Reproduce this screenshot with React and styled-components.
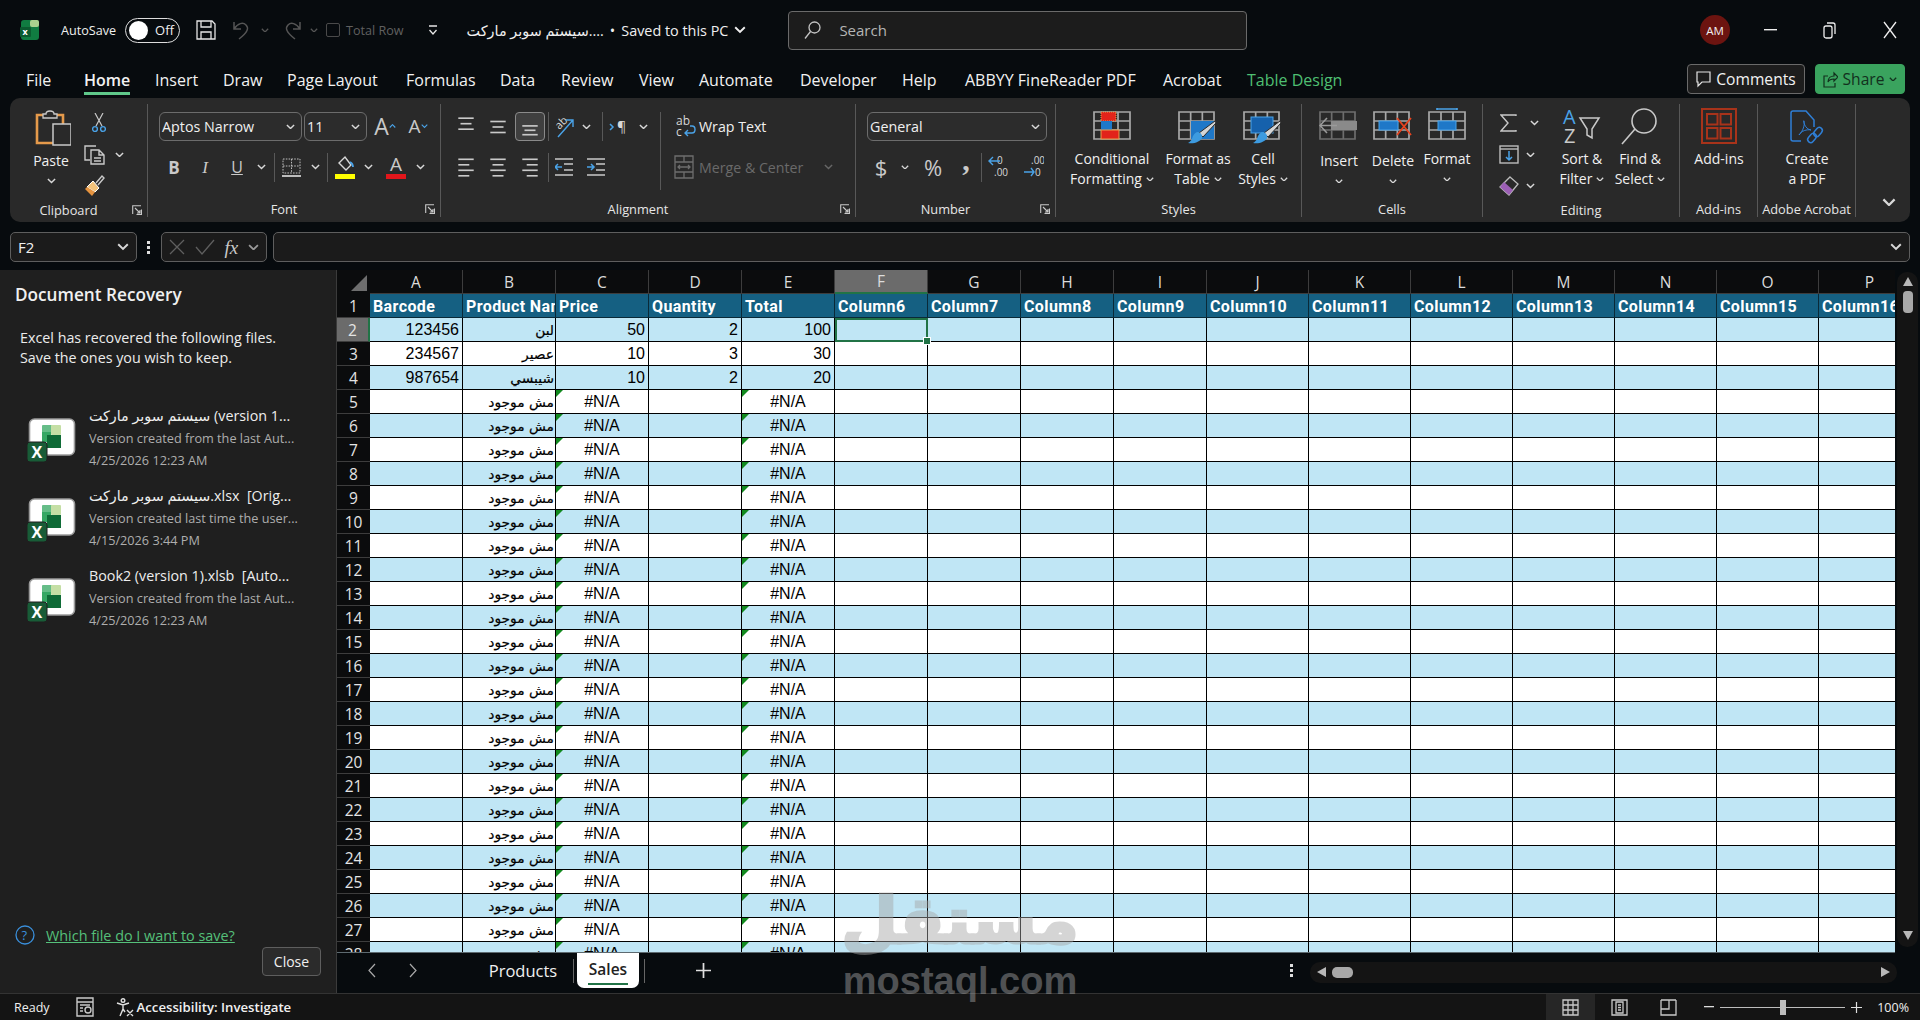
import React from "react";
import styled, { createGlobalStyle } from "styled-components";

const ui = `"Open Sans", "Noto Sans", "DejaVu Sans", sans-serif`;
const arabicUi = `"Open Sans", "DejaVu Sans", sans-serif`;

const Global = createGlobalStyle`
  html, body { margin: 0; padding: 0; background: #070b0e; }
  * { box-sizing: border-box; }
`;

const Page = styled.div`
  position: relative;
  width: 1920px;
  height: 1020px;
  overflow: hidden;
  display: flex;
  flex-direction: column;
  background: #070b0e;
  color: #f0f0f0;
  font-family: ${ui};
`;

/* title bar */
const TitleBar = styled.div`
  height: 60px;
  display: flex;
  align-items: center;
  padding-left: 20px;
  font-size: 12.6px;
  flex: none;
`;
const TitleItem = styled.div`
  display: flex;
  align-items: center;
  margin-left: ${(p) => p.$ml || 0}px;
  color: ${(p) => p.$color || "#f0f0f0"};
`;
const DocName = styled(TitleItem)`
  font-family: ${arabicUi};
  font-size: 14.4px;
  gap: 6px;
`;
const Toggle = styled.div`
  width: 55px;
  height: 25px;
  margin-left: 9px;
  border: 1px solid #ddd;
  border-radius: 13px;
  display: flex;
  align-items: center;
  padding-left: 3px;
  font-size: 13px;
  gap: 7px;
  &::before {
    content: "";
    width: 19px;
    height: 19px;
    border-radius: 50%;
    background: #fff;
  }
`;
const Check = styled.div`
  width: 14px;
  height: 14px;
  border: 1px solid #4a4a4a;
  border-radius: 2px;
  margin-left: 8px;
`;
const SearchBox = styled.div`
  width: 459px;
  height: 39px;
  margin-left: 42px;
  background: #1c1c1c;
  border: 1px solid #6a6a6a;
  border-radius: 4px;
  display: flex;
  align-items: center;
  padding-left: 15px;
  gap: 18px;
  color: #b5b5b5;
  font-size: 15px;
`;
const Avatar = styled.div`
  width: 30px;
  height: 30px;
  margin-left: auto;
  border-radius: 50%;
  background: #6c1410;
  font-size: 11.5px;
  display: flex;
  align-items: center;
  justify-content: center;
`;
const WinBtn = styled.div`
  width: ${(p) => p.$w}px;
  margin-left: ${(p) => p.$ml || 0}px;
  display: flex;
  justify-content: center;
`;

/* tab row */
const TabRow = styled.div`
  height: 38px;
  flex: none;
  display: flex;
  align-items: flex-start;
  padding: 4px 15px 0 26px;
`;
const Tab = styled.div`
  width: ${(p) => p.$w}px;
  margin-top: 6px;
  font-size: 16px;
  line-height: 20px;
  white-space: nowrap;
  color: ${(p) => (p.$green ? "#4fbf72" : "#f2f2f2")};
`;
const TabText = styled.span`
  display: inline-block;
  padding-bottom: 2px;
  font-weight: ${(p) => (p.$on ? 600 : 400)};
  border-bottom: 3px solid ${(p) => (p.$on ? "#5fc88a" : "transparent")};
`;
const TopBtn = styled.div`
  height: 30px;
  width: ${(p) => p.$w}px;
  margin-left: ${(p) => (p.$auto ? "auto" : (p.$ml || 0) + "px")};
  border-radius: 4px;
  border: 1px solid ${(p) => (p.$fill ? p.$fill : "#6a6a6a")};
  background: ${(p) => p.$fill || "#1d1d1d"};
  color: ${(p) => (p.$fill ? "#12301d" : "#f2f2f2")};
  font-size: 15.6px;
  display: flex;
  align-items: center;
  justify-content: center;
  gap: 5px;
`;

/* ribbon */
const Ribbon = styled.div`
  height: 124px;
  margin: 0 10px;
  flex: none;
  background: #292929;
  border-radius: 10px;
  display: flex;
  font-size: 14px;
  color: #f0f0f0;
`;
const Group = styled.div`
  width: ${(p) => p.$w}px;
  height: 113px;
  margin-top: 6px;
  display: flex;
  flex-direction: column;
  border-right: 1px solid #585858;
  flex: none;
`;
const GroupBody = styled.div`
  height: 98px;
  display: flex;
  padding: ${(p) => p.$pad || "0"};
`;
const GroupFoot = styled.div`
  height: 16px;
  display: flex;
  align-items: center;
  font-size: 12.8px;
  line-height: 16px;
  white-space: nowrap;
  color: #e6e6e6;
`;
const FootLabel = styled.div`
  flex: 1;
  text-align: center;
`;
const Launcher = styled.div`
  width: 20px;
  height: 16px;
  display: flex;
  align-items: center;
  justify-content: center;
`;
const Stack = styled.div`
  display: flex;
  flex-direction: column;
  align-items: ${(p) => (p.$center ? "center" : "stretch")};
  width: ${(p) => (p.$w ? p.$w + "px" : "auto")};
  flex: none;
  border-right: ${(p) => (p.$line ? "1px solid #585858" : "none")};
  height: ${(p) => (p.$line ? "78px" : "auto")};
  margin-top: ${(p) => p.$mt || 0}px;
`;
const BarRow = styled.div`
  display: flex;
  align-items: center;
  height: ${(p) => p.$h || 29}px;
  margin-top: ${(p) => p.$mt || 0}px;
  padding-left: ${(p) => p.$pl || 0}px;
`;
const Slot = styled.div`
  width: ${(p) => p.$w}px;
  height: ${(p) => p.$h || 29}px;
  flex: none;
  margin-left: ${(p) => p.$ml || 0}px;
  display: flex;
  align-items: center;
  justify-content: center;
  border: ${(p) => (p.$on ? "1px solid #8a8a8a" : "none")};
  border-radius: 4px;
  background: ${(p) => (p.$on ? "#3f3f3f" : "none")};
`;
const VLine = styled.div`
  width: 1px;
  height: 29px;
  flex: none;
  background: #585858;
  margin-left: ${(p) => p.$ml || 0}px;
`;
const Combo = styled.div`
  width: ${(p) => p.$w}px;
  height: 29px;
  margin-left: ${(p) => p.$ml || 0}px;
  flex: none;
  border: 1px solid #6c6c6c;
  border-radius: 6px;
  background: #2c2c2c;
  display: flex;
  align-items: center;
  justify-content: space-between;
  padding: 0 6px 0 2px;
  font-size: 14.3px;
`;
const Glyph = styled.span`
  font-family: ${(p) => p.$font || ui};
  font-size: ${(p) => p.$size || 16}px;
  font-weight: ${(p) => p.$weight || 400};
  font-style: ${(p) => (p.$italic ? "italic" : "normal")};
  text-decoration: ${(p) => (p.$under ? "underline" : "none")};
  color: ${(p) => p.$color || "#c9c9c9"};
  padding-bottom: ${(p) => p.$lift || 0}px;
  line-height: 1;
`;
const SmallText = styled.span`
  color: ${(p) => (p.$dim ? "#6a6a6a" : "#f0f0f0")};
  margin-left: ${(p) => p.$ml || 0}px;
  font-size: 14.2px;
  white-space: nowrap;
`;
const BigBtn = styled.div`
  width: ${(p) => p.$w}px;
  flex: none;
  display: flex;
  flex-direction: column;
  align-items: center;
  padding-top: 4px;
`;
const BigIcon = styled.div`
  height: 41px;
  display: flex;
  justify-content: center;
`;
const BigLine = styled.div`
  height: 20px;
  margin-top: ${(p) => p.$mt || 0}px;
  line-height: 20px;
  white-space: nowrap;
  display: flex;
  align-items: center;
  gap: 4px;
`;
const Collapse = styled.div`
  margin: auto 14px 12px auto;
`;

/* formula bar */
const FormulaBar = styled.div`
  height: 30px;
  margin: 10px 10px 8px;
  flex: none;
  display: flex;
  align-items: stretch;
`;
const FormulaBox = styled.div`
  width: ${(p) => (p.$w ? p.$w + "px" : "auto")};
  flex: ${(p) => (p.$w ? "none" : 1)};
  margin-left: ${(p) => p.$ml || 0}px;
  background: #1b1b1b;
  border: 1px solid #5e5e5e;
  border-radius: 5px;
  display: flex;
  align-items: center;
  justify-content: space-between;
  padding: 0 7px;
  font-size: 15px;
`;
const Dots = styled.div`
  width: 3px;
  height: 13px;
  flex: none;
  margin: ${(p) => (p.$flush ? "0" : "auto 0 auto 10px")};
  background: repeating-linear-gradient(#ddd 0 3px, transparent 3px 5px);
`;

/* main */
const Main = styled.div`
  flex: 1;
  display: flex;
  min-height: 0;
`;
const Panel = styled.div`
  width: 337px;
  flex: none;
  background: #1f1f1f;
  border-right: 1px solid #3b3b3b;
  display: flex;
  flex-direction: column;
  padding-top: 13px;
`;
const PanelTitle = styled.div`
  font-size: 17.2px;
  font-weight: 600;
  line-height: 24px;
  padding-left: 15px;
`;
const PanelDesc = styled.div`
  margin: 21px 0 37px;
  padding-left: 20px;
  font-size: 14.3px;
  line-height: 20px;
  color: #ececec;
`;
const Recovered = styled.div`
  height: 80px;
  display: flex;
  padding-left: 27px;
  gap: 12px;
`;
const RecIcon = styled.div`
  margin-top: 13px;
  width: 50px;
  height: 46px;
`;
const RecLine = styled.div`
  height: 22px;
  line-height: 22px;
  white-space: pre;
  font-size: ${(p) => (p.$main ? 14.3 : 12.7)}px;
  color: ${(p) => (p.$main ? "#eeeeee" : "#aeaeae")};
  font-family: ${arabicUi};
`;
const HelpRow = styled.div`
  margin-top: auto;
  padding: 0 0 0 15px;
  display: flex;
  align-items: center;
  gap: 11px;
  font-size: 14.4px;
`;
const HelpLink = styled.span`
  color: #55c07a;
  text-decoration: underline;
`;
const CloseBtn = styled.div`
  width: 59px;
  height: 29px;
  margin: 2px 0 17px 262px;
  border: 1px solid #5e5e5e;
  border-radius: 4px;
  background: #2b2b2b;
  display: flex;
  align-items: center;
  justify-content: center;
  font-size: 14px;
`;

const Workbook = styled.div`
  flex: 1;
  min-width: 0;
  display: flex;
  flex-direction: column;
`;
const SheetRow = styled.div`
  height: 683px;
  display: flex;
  flex: none;
`;
const Sheet = styled.div`
  flex: 1;
  min-width: 0;
  overflow: hidden;
  display: grid;
  grid-template-columns: 33px repeat(9, 93px) repeat(7, 102px);
  grid-auto-rows: 24px;
  border-bottom: 1px solid #5d6a70;
  align-content: start;
`;
const Corner = styled.div`
  background: #0b0c0d;
  display: flex;
  align-items: flex-end;
  justify-content: flex-end;
  padding: 0 3px 3px 0;
  &::after {
    content: "";
    width: 16px;
    height: 16px;
    background: #6e6e6e;
    clip-path: polygon(100% 0, 100% 100%, 0 100%);
  }
`;
const ColHead = styled.div`
  background: ${(p) => (p.$on ? "#6b6b6b" : "#0b0c0d")};
  border-right: 1px solid #3d3d3d;
  border-bottom: ${(p) => (p.$on ? "2px solid #217346" : "1px solid #3d3d3d")};
  color: #dcdcdc;
  font-size: 15.5px;
  display: flex;
  align-items: center;
  justify-content: center;
`;
const RowHead = styled.div`
  background: ${(p) => (p.$on ? "#6b6b6b" : "#0b0c0d")};
  border-bottom: 1px solid #3d3d3d;
  border-right: ${(p) => (p.$on ? "2px solid #217346" : "none")};
  color: #e4e4e4;
  font-size: 15.5px;
  display: flex;
  align-items: center;
  justify-content: center;
`;
const HeadCell = styled.div`
  background: #156082;
  color: #fff;
  font-family: Roboto, "Liberation Sans", sans-serif;
  font-weight: 700;
  font-size: 16px;
  letter-spacing: 0.4px;
  line-height: 25px;
  padding-left: 3px;
  white-space: nowrap;
  overflow: hidden;
  border-right: 1px solid #0a2a38;
  border-bottom: 1px solid #0a2a38;
`;
const Cell = styled.div`
  position: relative;
  background: ${(p) => (p.$band ? "#c0e6f5" : "#fff")};
  color: #000;
  font-family: "Liberation Sans", "DejaVu Sans", sans-serif;
  font-size: 16px;
  line-height: 24px;
  padding: 0 3px;
  text-align: ${(p) => p.$align || "right"};
  white-space: nowrap;
  border-right: 1px solid #000;
  border-bottom: 1px solid #000;
  &::before {
    content: "";
    display: ${(p) => (p.$error ? "block" : "none")};
    position: absolute;
    top: 0;
    left: 0;
    border-style: solid;
    border-width: 7px 7px 0 0;
    border-color: #128a1f transparent transparent transparent;
  }
`;
const ArabicText = styled.span`
  font-family: "DejaVu Sans", sans-serif;
  font-size: 13.8px;
  margin-right: -2px;
  -webkit-text-stroke: 0.2px #000;
`;
const ActiveCell = styled(Cell)`
  z-index: 1;
  outline: 2px solid #217346;
  outline-offset: -2px;
  &::after {
    content: "";
    position: absolute;
    right: -4px;
    bottom: -4px;
    width: 6px;
    height: 6px;
    background: #217346;
    border: 1px solid #fff;
  }
`;
const VScroll = styled.div`
  width: 25px;
  flex: none;
  display: flex;
  flex-direction: column;
  align-items: center;
  padding: 2px 2px 6px;
  background: #070b0e;
`;
const VTrack = styled.div`
  flex: 1;
  width: 21px;
  border-radius: 10px;
  background: #141414;
  display: flex;
  flex-direction: column;
  align-items: center;
  padding: 4px 0 6px;
`;
const VThumb = styled.div`
  width: 10px;
  height: 22px;
  margin: 4px 0 auto;
  border-radius: 4px;
  background: #a8a8a8;
`;
const TabStrip = styled.div`
  height: 40px;
  flex: none;
  display: flex;
  align-items: flex-start;
`;
const StripSlot = styled.div`
  width: ${(p) => p.$w}px;
  height: 35px;
  flex: none;
  margin-left: ${(p) => p.$ml || 0}px;
  display: flex;
  align-items: center;
  justify-content: center;
  font-size: 16.5px;
  white-space: nowrap;
`;
const SalesTab = styled.div`
  width: 62px;
  height: 35px;
  margin-left: ${(p) => p.$ml}px;
  background: #fff;
  color: #222;
  font-size: 15.5px;
  font-weight: 600;
  border-radius: 0 0 7px 7px;
  display: flex;
  flex-direction: column;
  align-items: center;
  justify-content: flex-end;
  padding-bottom: 3px;
  &::after {
    content: "";
    width: 40px;
    height: 2px;
    margin-top: 3px;
    background: #217346;
  }
`;
const TabSep = styled.div`
  width: 1px;
  height: 24px;
  margin: 6px 0 0 ${(p) => p.$ml || 0}px;
  background: #666;
`;
const HScroll = styled.div`
  width: 587px;
  height: 21px;
  margin: 9px 0 0 9px;
  border-radius: 10px;
  background: #141414;
  display: flex;
  align-items: center;
  padding: 0 6px;
`;
const HThumb = styled.div`
  width: 21px;
  height: 11px;
  margin-left: 6px;
  margin-right: auto;
  border-radius: 5px;
  background: #a8a8a8;
`;

/* status bar */
const StatusBar = styled.div`
  height: 27px;
  flex: none;
  background: #141414;
  border-top: 1px solid #333;
  display: flex;
  align-items: center;
  font-size: 12.5px;
  padding-left: 14px;
`;
const StatusItem = styled.div`
  display: flex;
  align-items: center;
  gap: ${(p) => p.$gap || 0}px;
  margin-left: ${(p) => p.$ml || 0}px;
  margin-right: ${(p) => p.$mr || 0}px;
  font-weight: ${(p) => p.$weight || 400};
  font-size: ${(p) => (p.$big ? "13.2px" : "inherit")};
`;
const ViewBtn = styled.div`
  width: 49px;
  height: 26px;
  flex: none;
  margin-left: ${(p) => (p.$auto ? "auto" : 0)};
  background: ${(p) => (p.$on ? "#262626" : "none")};
  display: flex;
  align-items: center;
  justify-content: center;
`;
const Zoom = styled.div`
  width: 125px;
  height: 1px;
  margin: 0 6px;
  background: #bdbdbd;
  display: flex;
  align-items: center;
  justify-content: center;
  &::after {
    content: "";
    width: 6px;
    height: 15px;
    background: #bdbdbd;
  }
`;

/* watermark */
const Watermark = styled.div`
  position: absolute;
  left: 830px;
  top: 882px;
  width: 260px;
  text-align: center;
  pointer-events: none;
  color: rgb(165, 165, 165);
  opacity: 0.46;
  font-weight: 700;
`;
const MarkArabic = styled.div`
  font-family: "DejaVu Sans", sans-serif;
  font-size: 65px;
  line-height: 78px;
  direction: rtl;
  -webkit-text-stroke: 3px rgb(165, 165, 165);
`;
const MarkLatin = styled.div`
  font-family: "Liberation Sans", sans-serif;
  font-size: 38px;
  line-height: 42px;
`;

/* icons */
const Ico = ({ w, h = w, children }) => (
  <svg width={w} height={h} viewBox={`0 0 ${w} ${h}`} fill="none" stroke="#c9c9c9" strokeWidth="1.4">
    {children}
  </svg>
);
const Chev = ({ size = 9, color = "#d8d8d8", up }) => (
  <svg width={size} height={size * 0.6} viewBox="0 0 10 6" fill="none" stroke={color} strokeWidth="1.6">
    <path d={up ? "M1 5l4-4 4 4" : "M1 1l4 4 4-4"} />
  </svg>
);
const Launch = () => (
  <Ico w={10}>
    <path d="M9.500 4.500v5h-5M.7 9V.7H9M3 3l5 5M8 5v3H5" strokeWidth="1.1" />
  </Ico>
);

const XlLogo = () => (
  <svg width="20" height="20" viewBox="0 0 20 20">
    <rect x="1" y="0" width="18" height="20" rx="3" fill="#107c41" />
    <rect x="10" y="0" width="9" height="7" rx="2" fill="#a9d18e" />
    <rect x="0" y="7" width="11" height="10" rx="1" fill="#0b5c30" />
    <text x="2.500" y="15" fontSize="9" fontWeight="700" fill="#fff" fontFamily="Open Sans">x</text>
  </svg>
);
const SaveIcon = () => (
  <svg width="20" height="20" viewBox="0 0 20 20" fill="none" stroke="#e6e6e6" strokeWidth="1.3">
    <path d="M1 1h15l3 3v15H1zM5 1v6h10V1M5 19v-7h10v7" />
  </svg>
);
const Undo = ({ flip }) => (
  <svg width="20" height="20" viewBox="0 0 20 20" fill="none" stroke="#555" strokeWidth="1.5" style={flip ? { transform: "scaleX(-1)" } : undefined}>
    <path d="M2 2v7h7M2 9c4-6 9-7 12-4 3 3 2 7-7 14" />
  </svg>
);
const Customize = () => (
  <svg width="10" height="11" viewBox="0 0 10 11" fill="none" stroke="#e6e6e6" strokeWidth="1.3">
    <path d="M1 1h8M1.500 5l3.500 4 3.500-4" />
  </svg>
);
const SearchGlass = () => (
  <svg width="17" height="19" viewBox="0 0 17 19" fill="none" stroke="#c4c4c4" strokeWidth="1.3">
    <circle cx="10.500" cy="6.500" r="5.500" />
    <path d="M6.500 10.500L1 17.500" />
  </svg>
);
const Minimize = () => <svg width="13" height="2" viewBox="0 0 13 2"><rect width="13" height="1.400" fill="#eee" /></svg>;
const Restore = () => (
  <svg width="13" height="19" viewBox="0 0 13 19" fill="none" stroke="#eee" strokeWidth="1.3">
    <rect x="1" y="5" width="8" height="12" rx="2" />
    <path d="M4 2h6a2 2 0 0 1 2 2v9" />
  </svg>
);
const CloseX = () => (
  <svg width="14" height="20" viewBox="0 0 14 20" fill="none" stroke="#eee" strokeWidth="1.3">
    <path d="M1 2l12 16M13 2L1 18" />
  </svg>
);
const CommentIcon = () => (
  <svg width="15" height="17" viewBox="0 0 15 17" fill="none" stroke="#e6e6e6" strokeWidth="1.2">
    <path d="M1 1h13v10H6l-4 4v-4H1z" />
  </svg>
);
const ShareIcon = () => (
  <svg width="15" height="17" viewBox="0 0 15 17" fill="none" stroke="#12301d" strokeWidth="1.2">
    <path d="M5 5H1v11h11v-4M5 11c0-4 3-6 6-6V2l4 4-4 4V8c-3 0-5 1-6 3z" />
  </svg>
);

const PasteIcon = () => (
  <svg width="40" height="41" viewBox="0 0 40 41" fill="none">
    <path d="M12 7H6v28h16" stroke="#e59a4b" strokeWidth="2.600" />
    <path d="M26 7h6v9" stroke="#e59a4b" strokeWidth="2.600" />
    <path d="M12 10V6h3c0-4 8-4 8 0h3v4z" fill="#292929" stroke="#c9c9c9" strokeWidth="1.300" />
    <rect x="22" y="16" width="18" height="21" fill="#292929" stroke="#c9c9c9" strokeWidth="1.500" />
  </svg>
);
const Scissors = () => (
  <svg width="14" height="20" viewBox="0 0 14 20" fill="none">
    <path d="M3 0l7 13M11 0L4 13" stroke="#c9c9c9" strokeWidth="1.200" />
    <circle cx="3" cy="16" r="2.400" stroke="#4aa3e8" strokeWidth="1.400" />
    <circle cx="11" cy="16" r="2.400" stroke="#4aa3e8" strokeWidth="1.400" />
  </svg>
);
const CopyIcon = () => (
  <Ico w={21} h={20}>
    <path d="M12 1H1v14h5M7 5h8l5 5v9H7zM15 5v5h5M10 13h7M10 16h7" />
  </Ico>
);
const BrushIcon = () => (
  <svg width="21" height="24" viewBox="0 0 21 24" fill="none">
    <path d="M12 9l6-7 2 2-6 7" stroke="#c9c9c9" strokeWidth="1.400" />
    <path d="M9 7l6 7-4 4-8-5z" fill="#f2c27a" stroke="#fff" strokeWidth="1" />
    <path d="M3 13l8 5-3 4-7-7z" fill="#e5933f" />
  </svg>
);
const FillIcon = () => (
  <svg width="20" height="24" viewBox="0 0 20 24" fill="none">
    <path d="M4 8l6-6 6 8-5 5z" stroke="#d8d8d8" strokeWidth="1.400" />
    <path d="M15 7c2 1 3 3 3 5" stroke="#4aa3e8" strokeWidth="1.800" />
    <rect y="19" width="20" height="5" fill="#ffff00" />
  </svg>
);
const BorderIcon = () => (
  <svg width="19" height="19" viewBox="0 0 19 19" fill="none" stroke="#bdbdbd">
    <path d="M1 1h17v14H1zM9.500 1v14M1 8h17" strokeDasharray="1.600 1.200" />
    <path d="M0 18h19" strokeWidth="2" />
  </svg>
);
const Bars = ({ rows }) => (
  <svg width="18" height="22" viewBox="0 0 16 20" fill="none" stroke="#c9c9c9" strokeWidth="1.500">
    {rows.map(([a, b, y]) => (
      <path key={y} d={`M${a} ${y}H${b}`} />
    ))}
  </svg>
);
const OrientIcon = () => (
  <svg width="20" height="24" viewBox="0 0 20 24" fill="none">
    <text x="2" y="13" fontSize="11" fill="#d8d8d8" fontFamily="Open Sans" transform="rotate(-45 6 10)">ab</text>
    <path d="M4 22L19 5M12 5h7v7" stroke="#4aa3e8" strokeWidth="1.400" />
  </svg>
);
const RtlIcon = () => (
  <svg width="22" height="16" viewBox="0 0 22 16" fill="none">
    <path d="M1 5l3 3-3 3" stroke="#4aa3e8" strokeWidth="1.500" />
    <text x="8" y="13" fontSize="14" fill="#d8d8d8" fontFamily="Open Sans">¶</text>
  </svg>
);
const WrapIcon = () => (
  <svg width="20" height="24" viewBox="0 0 20 24" fill="none">
    <text x="0" y="10" fontSize="12" fill="#d8d8d8" fontFamily="Open Sans">ab</text>
    <text x="0" y="21" fontSize="12" fill="#d8d8d8" fontFamily="Open Sans">c</text>
    <path d="M14 11h2c4 0 4 7 0 7H9M12 15l-3 3 3 3" stroke="#4aa3e8" strokeWidth="1.400" />
  </svg>
);
const MergeIcon = () => (
  <svg width="20" height="24" viewBox="0 0 20 24" fill="none" stroke="#6e6e6e" strokeWidth="1.300">
    <path d="M1 1h18v22H1zM1 7h18M1 17h18M10 1v6M10 17v6M4 12h12M6 10l-2 2 2 2M14 10l2 2-2 2" />
  </svg>
);
const IndentIcon = ({ flip }) => (
  <svg width="18" height="20" viewBox="0 0 18 20" fill="none" strokeWidth="1.500">
    <path d="M0 2h18M9 7h9M9 13h9M0 18h18" stroke="#c9c9c9" />
    {flip ? <path d="M0 10h7M4 7l3 3-3 3" stroke="#4aa3e8" /> : <path d="M7 10H0M3 7l-3 3 3 3" stroke="#4aa3e8" />}
  </svg>
);
const DecIcon = ({ more }) => (
  <svg width="22" height="24" viewBox="0 0 22 24" fill="none">
    <text x="9" y="9" fontSize="10" fill="#d8d8d8" fontFamily="Open Sans">{more ? ".00" : "0"}</text>
    <text x={more ? 13 : 6} y="21" fontSize="10" fill="#d8d8d8" fontFamily="Open Sans">{more ? "0" : ".00"}</text>
    {more ? (
      <path d="M2 17h10M9 13l3 4-3 4" stroke="#4aa3e8" strokeWidth="1.400" />
    ) : (
      <path d="M12 6H2M5 2L1 6l4 4" stroke="#4aa3e8" strokeWidth="1.400" />
    )}
  </svg>
);

const GridLines = ({ x, y, w, h, cols = 3, rows = 3, color = "#a8a8a8" }) => {
  const parts = [`M${x} ${y}h${w}v${h}h${-w}z`];
  for (let i = 1; i < cols; i++) parts.push(`M${x + (w / cols) * i} ${y}v${h}`);
  for (let i = 1; i < rows; i++) parts.push(`M${x} ${y + (h / rows) * i}h${w}`);
  return <path d={parts.join("")} stroke={color} strokeWidth="1.700" />;
};
const BrushTip = ({ x, y }) => (
  <g transform={`translate(${x} ${y})`}>
    <path d="M11 12L27 0l1 2-13 14z" fill="#d5d5d5" stroke="#292929" strokeWidth="1" />
    <path d="M10 11c2 0 5 3 4 6-2 4-8 6-14 5 4-2 4-5 5-7 1-2 3-4 5-4z" fill="#3d9be0" />
  </g>
);
const BigSvg = ({ children }) => (
  <svg width="40" height="41" viewBox="0 0 40 41" fill="none">
    {children}
  </svg>
);
const CondIcon = () => (
  <BigSvg>
    <GridLines x={2} y={4} w={36} h={27} />
    <rect x="9" y="4" width="15" height="9" fill="#e2231a" stroke="#e9a04d" strokeDasharray="1 1" />
    <rect x="9" y="13" width="11" height="9" fill="#1f78c8" />
    <rect x="9" y="22" width="18" height="9" fill="#e2231a" stroke="#e9a04d" />
  </BigSvg>
);
const TableStyleIcon = () => (
  <BigSvg>
    <GridLines x={1} y={4} w={35} h={27} />
    <rect x="13" y="13" width="23" height="18" fill="#1f78c8" />
    <BrushTip x={10} y={13} />
  </BigSvg>
);
const CellStyleIcon = () => (
  <BigSvg>
    <GridLines x={1} y={4} w={35} h={27} />
    <rect x="8" y="9" width="22" height="16" fill="#1661ac" stroke="#4aa3e8" />
    <BrushTip x={10} y={13} />
  </BigSvg>
);
const InsertIcon = () => (
  <BigSvg>
    <GridLines x={1} y={4} w={35} h={27} color="#6d6d6d" />
    <rect x="12" y="13" width="26" height="9" fill="#8a8a8a" />
    <path d="M18 17.500H1M8 10l-7 7.500L8 25" stroke="#9a9a9a" strokeWidth="1.600" />
  </BigSvg>
);
const DeleteIcon = () => (
  <BigSvg>
    <GridLines x={1} y={4} w={35} h={27} />
    <rect x="6" y="13" width="19" height="9" fill="#1f78c8" stroke="#4aa3e8" />
    <path d="M24 10l14 17M38 10L24 27" stroke="#e8431f" strokeWidth="1.800" />
  </BigSvg>
);
const FormatIcon = () => (
  <BigSvg>
    <GridLines x={2} y={4} w={36} h={27} />
    <rect x="11" y="13" width="18" height="9" fill="#1f78c8" stroke="#4aa3e8" />
    <path d="M10 0v2M30 0v2M10 1h20" stroke="#4aa3e8" strokeWidth="1.600" />
  </BigSvg>
);
const SigmaIcon = () => (
  <Ico w={17} h={18}>
    <path d="M16 2V1H1l7 8-7 8h15v-1" />
  </Ico>
);
const FillDownIcon = () => (
  <svg width="20" height="19" viewBox="0 0 20 19" fill="none">
    <rect x="1" y="1" width="18" height="17" fill="#222" stroke="#bdbdbd" strokeWidth="1.400" />
    <path d="M1 4h18" stroke="#bdbdbd" strokeWidth="1.400" />
    <path d="M10 6v9M7 12l3 3 3-3" stroke="#4aa3e8" strokeWidth="1.500" />
  </svg>
);
const EraserIcon = () => (
  <svg width="20" height="20" viewBox="0 0 20 20" fill="none">
    <path d="M11 1l8 7-9 11-9-8z" stroke="#bdbdbd" strokeWidth="1.300" />
    <path d="M1 11l4-5 9 8-4 5z" fill="#9c5fb5" />
  </svg>
);
const SortIcon = () => (
  <svg width="40" height="41" viewBox="0 0 40 41" fill="none">
    <text x="1" y="16" fontSize="20" fill="#4aa3e8" fontFamily="Open Sans">A</text>
    <text x="2" y="35" fontSize="20" fill="#c9c9c9" fontFamily="Open Sans">Z</text>
    <path d="M18 10h19l-7 11v9l-5-3v-6z" stroke="#c9c9c9" strokeWidth="1.500" />
  </svg>
);
const FindIcon = () => (
  <svg width="40" height="41" viewBox="0 0 40 41" fill="none" stroke="#c9c9c9" strokeWidth="1.600">
    <circle cx="24" cy="13" r="12" />
    <path d="M15 21L2 36" />
  </svg>
);
const AddinsIcon = () => (
  <svg width="40" height="41" viewBox="0 0 40 41" fill="none" stroke="#a8331a" strokeWidth="2">
    <rect x="3" y="1" width="34" height="34" />
    <rect x="8" y="6" width="10.500" height="10.500" />
    <rect x="21.500" y="6" width="10.500" height="10.500" />
    <rect x="8" y="20" width="10.500" height="10.500" />
    <rect x="21.500" y="20" width="10.500" height="10.500" />
  </svg>
);
const PdfIcon = () => (
  <svg width="40" height="41" viewBox="0 0 40 41" fill="none" stroke="#2f7fd6" strokeWidth="1.500">
    <path d="M14 33H6a2 2 0 0 1-2-2V5a2 2 0 0 1 2-2h13l8 9v7" />
    <path d="M12 27c4-4 6-10 5-14-1-2 0 8 7 9-4-1-10 1-12 5z" strokeWidth="1" />
    <rect x="20" y="27" width="10" height="6" rx="3" transform="rotate(-50 25 30)" />
    <rect x="26" y="21" width="10" height="6" rx="3" transform="rotate(-50 31 24)" />
  </svg>
);
const XMark = ({ color = "#5f5f5f", w = 16 }) => (
  <svg width={w} height={w} viewBox="0 0 16 16" fill="none" stroke={color} strokeWidth="1.300">
    <path d="M1 1l14 14M15 1L1 15" />
  </svg>
);
const Tick = () => (
  <svg width="20" height="16" viewBox="0 0 20 16" fill="none" stroke="#5f5f5f" strokeWidth="1.300">
    <path d="M1 8l6 7L19 1" />
  </svg>
);
const FileBadge = () => (
  <svg width="50" height="46" viewBox="0 0 50 46">
    <rect x="2.500" y="1" width="45" height="36" rx="5" fill="#fff" stroke="#9a9a9a" strokeWidth="1.600" />
    <rect x="15" y="7" width="10" height="9" fill="#66bd88" rx="1" />
    <rect x="24" y="7" width="10" height="10" fill="#c5dfa5" rx="1" />
    <rect x="15" y="14" width="9" height="10" fill="#36a764" />
    <rect x="20" y="17" width="14" height="13" fill="#0f6b37" />
    <rect x="0" y="24" width="20" height="20" rx="3" fill="#185c37" stroke="#1f1f1f" />
    <text x="4.500" y="39.500" fontSize="16" fontWeight="700" fill="#fff" fontFamily="Open Sans">X</text>
  </svg>
);
const HelpIcon = () => (
  <svg width="20" height="20" viewBox="0 0 20 20" fill="none">
    <circle cx="10" cy="10" r="9" stroke="#3a8fdb" strokeWidth="1.300" />
    <text x="6.500" y="15" fontSize="13" fill="#3a8fdb" fontFamily="Open Sans">?</text>
  </svg>
);
const Caret = ({ dir, color = "#b8b8b8" }) => {
  const shape = { up: "M5 1l5 9H0z", down: "M5 10L0 1h10z", left: "M1 5l9-5v10z", right: "M9 5L0 0v10z" };
  return (
    <svg width="10" height="11" viewBox="0 0 10 11" fill={color}>
      <path d={shape[dir]} />
    </svg>
  );
};
const Thin = ({ left }) => (
  <svg width="9" height="15" viewBox="0 0 9 15" fill="none" stroke="#aaa" strokeWidth="1.200">
    <path d={left ? "M8 1L2 7.500l6 6.500" : "M1 1l6 6.500L1 14"} />
  </svg>
);
const MacroIcon = () => (
  <Ico w={18} h={20}>
    <path d="M1 1h16v18H1zM1 5h16M4 8h10M4 11h3M4 14h3" />
    <circle cx="12" cy="13" r="3" />
  </Ico>
);
const AccessIcon = () => (
  <svg width="18" height="19" viewBox="0 0 18 19" fill="none" stroke="#e0e0e0" strokeWidth="1.400">
    <circle cx="7" cy="2.500" r="1.800" />
    <path d="M1 5l6 2 6-2M7 7v4l-3 7M7 11l2 3M11 12l6 6M17 12l-6 6" />
  </svg>
);
const ViewNormal = () => (
  <Ico w={17}>
    <path d="M1 1h15v15H1zM6 1v15M11 1v15M1 6h15M1 11h15" strokeWidth="1.300" />
  </Ico>
);
const ViewPage = () => (
  <Ico w={17}>
    <path d="M1 1h15v15H1zM5 3h7v11H5zM7 6h3M7 8.500h3M7 11h3" strokeWidth="1.300" />
  </Ico>
);
const ViewBreak = () => (
  <Ico w={17}>
    <path d="M1 1v15h15V1M1 10h8V1M9 1H1M9 1h7" strokeWidth="1.300" />
  </Ico>
);
const Plus = ({ s = 13, c = "#e0e0e0", sw = 1.4 }) => (
  <svg width={s} height={s} viewBox="0 0 13 13" fill="none" stroke={c} strokeWidth={sw}>
    <path d="M6.500 0v13M0 6.500h13" />
  </svg>
);

/* data */
const tabs = [
  ["File", 58], ["Home", 71, "on"], ["Insert", 68], ["Draw", 64], ["Page Layout", 119], ["Formulas", 94], ["Data", 61],
  ["Review", 78], ["View", 60], ["Automate", 101], ["Developer", 102], ["Help", 63], ["ABBYY FineReader PDF", 198],
  ["Acrobat", 84], ["Table Design", 100, "green"],
];
const columns = [
  "Barcode", "Product Name", "Price", "Quantity", "Total", "Column6", "Column7", "Column8", "Column9", "Column10",
  "Column11", "Column12", "Column13", "Column14", "Column15", "Column16",
];
const letters = "ABCDEFGHIJKLMNOP".split("");
const filled = {
  2: ["123456", "لبن", "50", "2", "100"],
  3: ["234567", "عصير", "10", "3", "30"],
  4: ["987654", "شيبسي", "10", "2", "20"],
};
const recovered = [
  ["سيستم سوبر ماركت (version 1...", "Version created from the last Aut...", "4/25/2026 12:23 AM"],
  ["سيستم سوبر ماركت.xlsx  [Orig...", "Version created last time the user...", "4/15/2026 3:44 PM"],
  ["Book2 (version 1).xlsb  [Auto...", "Version created from the last Aut...", "4/25/2026 12:23 AM"],
];
const rowNumbers = Array.from({ length: 27 }, (_, i) => i + 2);

function SheetRows() {
  return rowNumbers.map((n) => {
    const band = n % 2 === 0;
    const values = filled[n];
    return (
      <React.Fragment key={n}>
        <RowHead $on={n === 2}>{n}</RowHead>
        {letters.map((l, i) => {
          if (n === 2 && l === "F") return <ActiveCell key={l} $band={band} />;
          if (values && i < 5) {
            return (
              <Cell key={l} $band={band}>
                {i === 1 ? <ArabicText>{values[i]}</ArabicText> : values[i]}
              </Cell>
            );
          }
          if (!values && i === 1) {
            return (
              <Cell key={l} $band={band}>
                <ArabicText>مش موجود</ArabicText>
              </Cell>
            );
          }
          if (!values && (i === 2 || i === 4)) {
            return (
              <Cell key={l} $band={band} $align="center" $error>
                #N/A
              </Cell>
            );
          }
          return <Cell key={l} $band={band} />;
        })}
      </React.Fragment>
    );
  });
}

function GroupLabel({ children, launcher }) {
  return (
    <GroupFoot>
      <FootLabel>{children}</FootLabel>
      {launcher && (
        <Launcher>
          <Launch />
        </Launcher>
      )}
    </GroupFoot>
  );
}

function Big({ w, icon, lines, chev, drop }) {
  return (
    <BigBtn $w={w}>
      <BigIcon>{icon}</BigIcon>
      <BigLine $mt={drop ? 2 : 0}>{lines[0]}</BigLine>
      <BigLine>
        {lines[1]}
        {chev && <Chev size={8} />}
      </BigLine>
    </BigBtn>
  );
}

export default function App() {
  return (
    <Page>
      <Global />
      <TitleBar>
        <XlLogo />
        <TitleItem $ml={21}>AutoSave</TitleItem>
        <Toggle>Off</Toggle>
        <TitleItem $ml={16}><SaveIcon /></TitleItem>
        <TitleItem $ml={16}><Undo /></TitleItem>
        <TitleItem $ml={9}><Chev size={8} color="#555" /></TitleItem>
        <TitleItem $ml={13}><Undo flip /></TitleItem>
        <TitleItem $ml={8}><Chev size={8} color="#555" /></TitleItem>
        <Check />
        <TitleItem $ml={6} $color="#606060">Total Row</TitleItem>
        <TitleItem $ml={24}><Customize /></TitleItem>
        <DocName $ml={29}>
          <span>سيستم سوبر ماركت....</span> <span>•</span> <span>Saved to this PC</span> <Chev size={12} color="#eee" />
        </DocName>
        <SearchBox>
          <SearchGlass />
          Search
        </SearchBox>
        <Avatar>AM</Avatar>
        <WinBtn $w={42} $ml={19}><Minimize /></WinBtn>
        <WinBtn $w={76}><Restore /></WinBtn>
        <WinBtn $w={46}><CloseX /></WinBtn>
        <WinBtn $w={7} />
      </TitleBar>

      <TabRow>
        {tabs.map(([label, w, kind]) => (
          <Tab key={label} $w={w} $green={kind === "green"}>
            <TabText $on={kind === "on"}>{label}</TabText>
          </Tab>
        ))}
        <TopBtn $w={118} $auto>
          <CommentIcon /> Comments
        </TopBtn>
        <TopBtn $w={90} $ml={10} $fill="#3aa35e">
          <ShareIcon /> Share <Chev size={8} color="#12301d" />
        </TopBtn>
      </TabRow>

      <Ribbon>
        <Group $w={138}>
          <GroupBody $pad="0 0 0 8px">
            <BigBtn $w={66}>
              <BigIcon><PasteIcon /></BigIcon>
              <BigLine $mt={2}>Paste</BigLine>
              <BigLine><Chev size={9} /></BigLine>
            </BigBtn>
            <Stack $w={50} $mt={3}>
              <BarRow $h={32} $pl={4}><Slot $w={21} $h={24}><Scissors /></Slot></BarRow>
              <BarRow $h={32}><Slot $w={21} $h={24}><CopyIcon /></Slot><Slot $w={28} $h={24}><Chev /></Slot></BarRow>
              <BarRow $h={32}><Slot $w={21} $h={24}><BrushIcon /></Slot></BarRow>
            </Stack>
          </GroupBody>
          <GroupLabel launcher>Clipboard</GroupLabel>
        </Group>

        <Group $w={293}>
          <GroupBody $pad="8px 0 0 11px">
            <Stack>
              <BarRow>
                <Combo $w={143}><span>Aptos Narrow</span><Chev /></Combo>
                <Combo $w={63} $ml={2}><span>11</span><Chev /></Combo>
                <Slot $w={36}><Glyph $size={23}>A</Glyph><Chev size={7} color="#4aa3e8" up /></Slot>
                <Slot $w={30}><Glyph $size={19}>A</Glyph><Chev size={7} color="#4aa3e8" /></Slot>
              </BarRow>
              <BarRow $mt={11} $h={30}>
                <Slot $w={30}><Glyph $size={17} $weight={700}>B</Glyph></Slot>
                <Slot $w={32}><Glyph $size={17} $italic $font={`"Liberation Serif", serif`}>I</Glyph></Slot>
                <Slot $w={32}><Glyph $size={16} $under>U</Glyph></Slot>
                <Slot $w={16}><Chev /></Slot>
                <VLine $ml={5} />
                <Slot $w={33}><BorderIcon /></Slot>
                <Slot $w={14}><Chev /></Slot>
                <VLine $ml={5} />
                <Slot $w={33}><FillIcon /></Slot>
                <Slot $w={14}><Chev /></Slot>
                <Slot $w={36} $ml={3}>
                  <Stack $center>
                    <Glyph $size={19}>A</Glyph>
                    <svg width="20" height="5"><rect width="20" height="5" fill="#e2161b" /></svg>
                  </Stack>
                </Slot>
                <Slot $w={12}><Chev /></Slot>
              </BarRow>
            </Stack>
          </GroupBody>
          <GroupLabel launcher>Font</GroupLabel>
        </Group>

        <Group $w={415}>
          <GroupBody $pad="8px 0 0 9px">
            <Stack $w={211} $line>
              <BarRow>
                <Slot $w={32}><Bars rows={[[1, 15, 2], [3, 13, 7], [1, 15, 12]]} /></Slot>
                <Slot $w={32}><Bars rows={[[1, 15, 5], [3, 13, 10], [1, 15, 15]]} /></Slot>
                <Slot $w={30} $ml={1} $on><Bars rows={[[1, 15, 9], [3, 13, 13], [1, 15, 17]]} /></Slot>
                <VLine $ml={3} />
                <Slot $w={30}><OrientIcon /></Slot>
                <Slot $w={14}><Chev /></Slot>
                <VLine $ml={9} />
                <Slot $w={34}><RtlIcon /></Slot>
                <Slot $w={13}><Chev /></Slot>
              </BarRow>
              <BarRow $mt={11} $h={30}>
                <Slot $w={32}><Bars rows={[[1, 15, 3], [1, 11, 8], [1, 15, 13], [1, 11, 18]]} /></Slot>
                <Slot $w={32}><Bars rows={[[1, 15, 3], [3, 13, 8], [1, 15, 13], [3, 13, 18]]} /></Slot>
                <Slot $w={32}><Bars rows={[[1, 15, 3], [5, 15, 8], [1, 15, 13], [5, 15, 18]]} /></Slot>
                <VLine $ml={2} />
                <Slot $w={30}><IndentIcon /></Slot>
                <Slot $w={30} $ml={2}><IndentIcon flip /></Slot>
              </BarRow>
            </Stack>
            <Stack>
              <BarRow $pl={15}>
                <WrapIcon /><SmallText $ml={3}>Wrap Text</SmallText>
              </BarRow>
              <BarRow $mt={11} $h={30} $pl={13}>
                <MergeIcon /><SmallText $ml={5} $dim>Merge &amp; Center</SmallText>
                <Slot $w={14} $ml={18}><Chev color="#666" /></Slot>
              </BarRow>
            </Stack>
          </GroupBody>
          <GroupLabel launcher>Alignment</GroupLabel>
        </Group>

        <Group $w={200}>
          <GroupBody $pad="8px 0 0 11px">
            <Stack>
              <BarRow>
                <Combo $w={180}><span>General</span><Chev /></Combo>
              </BarRow>
              <BarRow $mt={11} $h={30}>
                <Slot $w={28}><Glyph $size={22}>$</Glyph></Slot>
                <Slot $w={20}><Chev size={8} /></Slot>
                <Slot $w={36}><Glyph $size={22}>%</Glyph></Slot>
                <Slot $w={30}><Glyph $size={30} $weight={700} $lift={14} $font={`"Liberation Serif", serif`}>,</Glyph></Slot>
                <VLine />
                <Slot $w={34}><DecIcon /></Slot>
                <Slot $w={34}><DecIcon more /></Slot>
              </BarRow>
            </Stack>
          </GroupBody>
          <GroupLabel launcher>Number</GroupLabel>
        </Group>

        <Group $w={246}>
          <GroupBody $pad="0 0 0 2px">
            <Big w={108} icon={<CondIcon />} lines={["Conditional", "Formatting"]} chev />
            <Big w={64} icon={<TableStyleIcon />} lines={["Format as", "Table"]} chev />
            <Big w={66} icon={<CellStyleIcon />} lines={["Cell", "Styles"]} chev />
          </GroupBody>
          <GroupLabel>Styles</GroupLabel>
        </Group>

        <Group $w={181}>
          <GroupBody $pad="0 0 0 10px">
            <Big w={54} icon={<InsertIcon />} lines={["Insert", ""]} chev drop />
            <Big w={54} icon={<DeleteIcon />} lines={["Delete", ""]} chev drop />
            <Big w={54} icon={<FormatIcon />} lines={["Format", ""]} chev />
          </GroupBody>
          <GroupLabel>Cells</GroupLabel>
        </Group>

        <Group $w={197}>
          <GroupBody>
            <Stack $w={73} $mt={3}>
              <BarRow $h={32} $pl={17}><SigmaIcon /><Slot $w={34} $h={20}><Chev /></Slot></BarRow>
              <BarRow $h={32} $pl={16}><FillDownIcon /><Slot $w={22} $h={20}><Chev /></Slot></BarRow>
              <BarRow $h={32} $pl={16}><EraserIcon /><Slot $w={22} $h={20}><Chev /></Slot></BarRow>
            </Stack>
            <Big w={52} icon={<SortIcon />} lines={["Sort &", "Filter"]} chev />
            <Big w={64} icon={<FindIcon />} lines={["Find &", "Select"]} chev />
          </GroupBody>
          <GroupLabel>Editing</GroupLabel>
        </Group>

        <Group $w={78}>
          <GroupBody>
            <Big w={78} icon={<AddinsIcon />} lines={["Add-ins", ""]} />
          </GroupBody>
          <GroupLabel>Add-ins</GroupLabel>
        </Group>

        <Group $w={98}>
          <GroupBody>
            <Big w={98} icon={<PdfIcon />} lines={["Create", "a PDF"]} />
          </GroupBody>
          <GroupLabel>Adobe Acrobat</GroupLabel>
        </Group>

        <Collapse><Chev size={14} /></Collapse>
      </Ribbon>

      <FormulaBar>
        <FormulaBox $w={127}>F2 <Chev size={12} /></FormulaBox>
        <Dots />
        <FormulaBox $w={106} $ml={11}>
          <XMark />
          <Tick />
          <Glyph $size={19} $italic $font={`"Liberation Serif", serif`}>fx</Glyph>
          <Chev size={11} color="#9a9a9a" />
        </FormulaBox>
        <FormulaBox $ml={6}>
          <span />
          <Chev size={12} />
        </FormulaBox>
      </FormulaBar>

      <Main>
        <Panel>
          <PanelTitle>Document Recovery</PanelTitle>
          <PanelDesc>
            Excel has recovered the following files.
            <br />
            Save the ones you wish to keep.
          </PanelDesc>
          {recovered.map(([name, note, date]) => (
            <Recovered key={name}>
              <RecIcon><FileBadge /></RecIcon>
              <div>
                <RecLine $main>{name}</RecLine>
                <RecLine>{note}</RecLine>
                <RecLine>{date}</RecLine>
              </div>
            </Recovered>
          ))}
          <HelpRow>
            <HelpIcon />
            <HelpLink>Which file do I want to save?</HelpLink>
          </HelpRow>
          <CloseBtn>Close</CloseBtn>
        </Panel>

        <Workbook>
          <SheetRow>
            <Sheet>
              <Corner />
              {letters.map((l) => (
                <ColHead key={l} $on={l === "F"}>{l}</ColHead>
              ))}
              <RowHead>1</RowHead>
              {columns.map((c) => (
                <HeadCell key={c}>{c}</HeadCell>
              ))}
              <SheetRows />
            </Sheet>
            <VScroll>
              <VTrack>
                <Caret dir="up" />
                <VThumb />
                <Caret dir="down" />
              </VTrack>
            </VScroll>
          </SheetRow>
          <TabStrip>
            <StripSlot $w={30} $ml={19}><Thin left /></StripSlot>
            <StripSlot $w={30} $ml={12}><Thin /></StripSlot>
            <StripSlot $w={80} $ml={55}>Products</StripSlot>
            <TabSep $ml={10} />
            <SalesTab $ml={3}>Sales</SalesTab>
            <TabSep $ml={5} />
            <StripSlot $w={30} $ml={43}><Plus s={15} sw={1.5} /></StripSlot>
            <StripSlot $w={20} $ml={563}>
              <Dots $flush />
            </StripSlot>
            <HScroll>
              <Caret dir="left" />
              <HThumb />
              <Caret dir="right" />
            </HScroll>
          </TabStrip>
        </Workbook>
      </Main>

      <StatusBar>
        <StatusItem>Ready</StatusItem>
        <StatusItem $ml={26}><MacroIcon /></StatusItem>
        <StatusItem $ml={22} $gap={3} $weight={600} $big><AccessIcon /> Accessibility: Investigate</StatusItem>
        <ViewBtn $on $auto><ViewNormal /></ViewBtn>
        <ViewBtn><ViewPage /></ViewBtn>
        <ViewBtn><ViewBreak /></ViewBtn>
        <StatusItem $ml={11}>
          <svg width="10" height="2"><rect width="10" height="1.300" fill="#ddd" /></svg>
          <Zoom />
          <Plus s={11} />
        </StatusItem>
        <StatusItem $ml={15} $mr={11}>100%</StatusItem>
      </StatusBar>

      <Watermark>
        <MarkArabic>مستقل</MarkArabic>
        <MarkLatin>mostaql.com</MarkLatin>
      </Watermark>
    </Page>
  );
}
